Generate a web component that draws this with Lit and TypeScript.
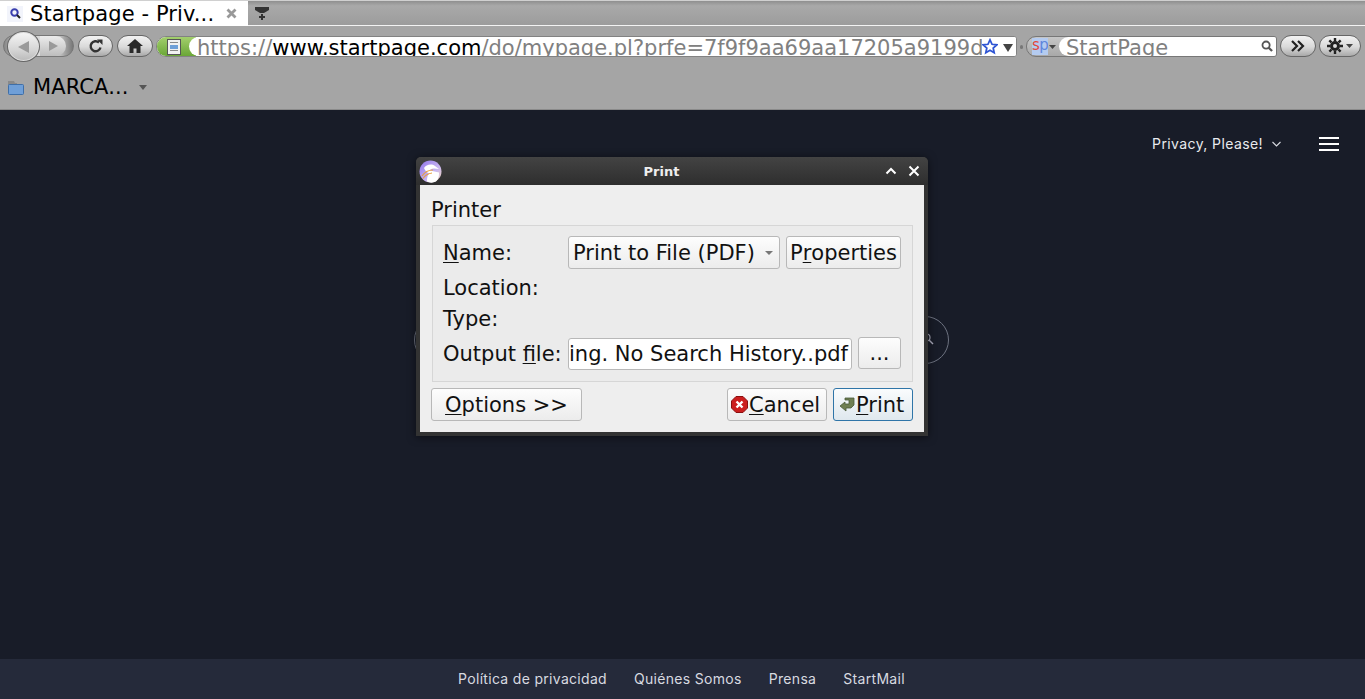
import { LitElement, html, css } from "lit";
import { customElement } from "lit/decorators.js";

@customElement("app-root")
export class AppRoot extends LitElement {
  static styles = css`
    :host { display: flex; flex-direction: column; width: 1365px; height: 699px; overflow: hidden; font-family: "DejaVu Sans", sans-serif; color: #000; }
    .chrome { background: #a5a5a5; height: 110px; flex: none; display: flex; flex-direction: column; border-bottom: 1px solid #8a8a8a; box-sizing: border-box; }
    .tabs { height: 26px; flex: none; display: flex; align-items: flex-start; background: linear-gradient(#8f8f8f, #a9a9a9 20%, #9c9c9c); border-bottom: 1px solid #f3f3f3; border-top: 1px solid #d0d0d0; box-sizing: border-box; }
    .tab { width: 248px; height: 25px; background: #fff; display: flex; align-items: center; box-sizing: border-box; padding-left: 7px; flex: none; }
    .tab-title { font-size: 21px; line-height: 25px; padding-top: 2px; margin-left: 7px; width: 195px; white-space: nowrap; letter-spacing: 0.1px; }
    .tab-close { width: 11px; height: 11px; flex: none; margin-left: 1px; }
    .all-tabs { margin: 6px 0 0 7px; width: 14px; height: 13px; flex: none; }
    .nav { height: 42px; flex: none; display: flex; align-items: flex-start; position: relative; padding: 9px 0 0 3px; box-sizing: border-box; }
    .backfwd { width: 71px; height: 22px; flex: none; position: relative; border-radius: 11px; border: 1px solid #777; box-sizing: border-box; background: linear-gradient(90deg, #888, #c8c8c8 20%, #e0e0e0 65%, #bcbcbc 82%, #777); }
    .fwd { position: absolute; left: 36px; top: 0; width: 26px; height: 20px; background: linear-gradient(#ececec, #bdbdbd); border-radius: 0 10px 10px 0; display: flex; align-items: center; justify-content: center; }
    .back { position: absolute; left: 3px; top: -5px; width: 33px; height: 31px; box-sizing: border-box; border: 1px solid #666; border-radius: 50%; background: linear-gradient(#f6f6f6, #d6d6d6 60%, #b9b9b9); box-shadow: 0 0 0 1px #ddd inset; display: flex; align-items: center; justify-content: center; }
    .pill { height: 22px; border: 1px solid #666; border-radius: 11px; box-sizing: border-box; background: linear-gradient(#f2f2f2, #d9d9d9 55%, #a9a9a9); display: flex; align-items: center; justify-content: center; flex: none; }
    .reload { width: 35px; margin-left: 4px; }
    .home { width: 36px; margin-left: 4px; }
    .url { width: 861px; height: 21px; margin: 1px 0 0 3px; flex: none; display: flex; border: 1px solid #828282; border-radius: 10px 3px 3px 10px; box-sizing: border-box; background: #fff; overflow: hidden; }
    .site { width: 39px; flex: none; background: linear-gradient(#a3cf6d, #6aa636); display: flex; align-items: center; padding-left: 10px; box-sizing: border-box; }
    .urlbody { flex: 1; min-width: 0; display: flex; position: relative; border-radius: 10px 0 0 10px; background: #fff; margin-left: -7px; padding-left: 8px; overflow: hidden; }
    .urltext { width: 785px; font-size: 21px; line-height: 22px; white-space: nowrap; overflow: hidden; flex: none; color: #808080; }
    .urltext b { font-weight: normal; color: #000; }
    .star { flex: none; margin: 1px 0 0 0; }
    .drop { flex: none; margin: 7px 0 0 5px; }
    .sep { width: 3px; height: 4px; background: #777; border-radius: 2px; margin: 10px 3px 0 3px; flex: none; }
    .search { width: 251px; height: 21px; margin-top: 1px; flex: none; display: flex; border: 1px solid #777; border-radius: 10px 3px 3px 10px; box-sizing: border-box; background: linear-gradient(#c6c6c6, #a8a8a8); overflow: hidden; }
    .engine { width: 33px; flex: none; display: flex; align-items: center; padding-left: 5px; box-sizing: border-box; }
    .sp { font-size: 15px; line-height: 15px; width: 16px; height: 17px; background: #b4cbf0; color: #e2483a; text-align: center; overflow: hidden; flex: none; letter-spacing: -0.5px; }
    .sp i { font-style: normal; color: #5f86dc; }
    .searchbody { flex: 1; display: flex; background: #fff; border-radius: 10px 0 0 10px; padding-left: 7px; margin-left: -1px; overflow: hidden; }
    .searchtext { flex: 1; font-size: 21px; line-height: 22px; color: #808080; white-space: nowrap; }
    .glass { flex: none; margin: 3px 3px 0 0; }
    .more { width: 36px; margin-left: 3px; }
    .gear { width: 42px; margin-left: 3px; }
    .marks { height: 41px; flex: none; display: flex; align-items: center; padding: 0 0 3px 8px; box-sizing: border-box; }
    .marktext { font-size: 21px; line-height: 28px; margin-left: 9px; letter-spacing: 0.1px; white-space: nowrap; }
    .caret { margin-left: 10px; flex: none; }
    .page { flex: 1; min-height: 0; position: relative; background: #181c28; display: flex; flex-direction: column; font-family: Inter, sans-serif; }
    .head { display: flex; justify-content: flex-end; align-items: center; padding: 20px 26px 0 0; height: 28px; color: #e8eaee; font-size: 14px; letter-spacing: 0.4px; flex: none; }
    .head span { padding-bottom: 2px; }
    .chev { margin: 0 0 0 9px; }
    .burger { width: 20px; height: 14px; margin-left: 38px; border-top: 2px solid #fff; border-bottom: 2px solid #fff; box-sizing: border-box; position: relative; }
    .burger::after { content: ""; position: absolute; left: 0; right: 0; top: 4px; height: 2px; background: #fff; }
    .spacer { flex: 1; }
    .foot { height: 40px; flex: none; box-sizing: border-box; padding: 0 2px 2px 0; background: #252a3a; color: #d8dae0; font-size: 14px; letter-spacing: 0.31px; display: flex; justify-content: center; align-items: center; gap: 27px; }
    .pillbox { position: absolute; left: 414px; top: 206px; width: 535px; height: 48px; box-sizing: border-box; border: 1px solid #6d7280; border-radius: 24px; }
    .pillglass { position: absolute; right: 14px; top: 16px; }
    .dlg { position: absolute; left: 416px; top: 47px; width: 512px; height: 279px; box-sizing: border-box; background: #333; border-radius: 5px 5px 0 0; padding: 0 4px 4px; display: flex; flex-direction: column; box-shadow: 0 1px 8px rgba(0,0,0,.55); font-family: "DejaVu Sans", sans-serif; }
    .bar { height: 28px; flex: none; display: flex; align-items: center; color: #eee; background: linear-gradient(#434343, #2e2e2e); margin: 0 -4px; padding: 0 8px 0 3px; border-radius: 5px 5px 0 0; }
    .bar-title { flex: 1; text-align: center; font-size: 13px; font-weight: bold; padding-right: 4px; }
    .bar-btns { display: flex; gap: 11px; align-items: center; }
    .body { flex: 1; background: #eeeeee; padding: 12px 11px 11px; display: flex; flex-direction: column; font-size: 21px; color: #111; }
    .legend { line-height: 27px; height: 28px; flex: none; }
    .group { height: 157px; width: 481px; margin-left: 1px; flex: none; background: #ebebeb; border: 1px solid #d6d6d6; box-sizing: border-box; padding: 10px 0 0 10px; display: grid; grid-template-columns: 119px 212px 115px; grid-template-rows: 33px 37px 26px 38px; column-gap: 6px; align-items: center; white-space: nowrap; }
    .out { align-self: end; line-height: 32px; }
    .wide { grid-column: 2 / 4; display: flex; gap: 6px; align-self: end; align-items: flex-end; }
    .ctl { box-sizing: border-box; height: 33px; border: 1px solid #b8b8b8; border-radius: 3px; background: linear-gradient(#fdfdfd, #ececec); display: flex; align-items: center; white-space: nowrap; }
    .combo { padding-left: 4px; justify-content: space-between; padding-right: 6px; }
    .prop { justify-content: center; }
    .input { width: 284px; background: #fff; overflow: hidden; padding-left: 0; flex: none; height: 32px; justify-content: flex-start; }
    .dots { width: 43px; height: 32px; justify-content: center; flex: none; margin-bottom: 1px; }
    u { text-underline-offset: 2px; text-decoration-thickness: 1px; }
    .actions { display: flex; align-items: center; margin-top: 6px; }
    .opts { width: 151px; justify-content: center; }
    .gap { flex: 1; }
    .cancel { width: 100px; padding-left: 3px; gap: 1px; }
    .print { width: 80px; margin-left: 6px; padding-left: 5px; gap: 0; border-color: #2f75a8; background: linear-gradient(#fafcfd, #dfe8ee); }
  `;

  render() {
    return html`
      <div class="chrome">
        <div class="tabs">
          <div class="tab">
            <svg width="16" height="16" viewBox="0 0 16 16" style="flex:none"><rect width="16" height="16" fill="#f2f4fb"/><circle cx="7.5" cy="6.5" r="3.2" fill="none" stroke="#3a3fae" stroke-width="2"/><path d="M10 9l3 3" stroke="#222" stroke-width="2"/></svg>
            <span class="tab-title">Startpage - Priv...</span>
            <svg class="tab-close" viewBox="0 0 11 11"><path d="M1.5 1.500l8 8M9.500 1.500l-8 8" stroke="#999" stroke-width="2.800"/></svg>
          </div>
          <svg class="all-tabs" viewBox="0 0 14 13"><path d="M0 0h14v3L9 6H5L0 3z" fill="#333"/><path d="M6 7h2v2h2v2H8v2H6v-2H4V9h2z" fill="#333"/></svg>
        </div>
        <div class="nav">
          <div class="backfwd">
            <div class="fwd"><svg width="12" height="12" viewBox="0 0 12 12"><path d="M2 1l9 5-9 5z" fill="#9a9a9a"/></svg></div>
            <div class="back"><svg width="14" height="14" viewBox="0 0 14 14"><path d="M12 1L1 7l11 6z" fill="#9a9a9a"/></svg></div>
          </div>
          <div class="pill reload"><svg width="16" height="16" viewBox="0 0 16 16"><path d="M12.500 9.500A5 5 0 1 1 11 4.500" fill="none" stroke="#333" stroke-width="2.400"/><path d="M9 1.500h5.500V7z" fill="#333"/></svg></div>
          <div class="pill home"><svg width="16" height="14" viewBox="0 0 16 14"><path d="M8 0L0 7h2.500v7H6.500V9.500h3V14h4V7H16z" fill="#2a2a2a"/></svg></div>
          <div class="url">
            <div class="site"><svg width="14" height="16" viewBox="0 0 14 16"><rect x=".5" y=".5" width="13" height="15" fill="#f1f1f1" stroke="#555"/><rect x="3" y="3" width="8" height="1" fill="#8a8a8a"/><rect x="3" y="6" width="8" height="4" fill="#6fa0d8"/><rect x="3" y="11" width="8" height="1" fill="#8a8a8a"/></svg></div>
            <div class="urlbody">
              <div class="urltext">https://<b>www.startpage.com</b>/do/mypage.pl?prfe=7f9f9aa69aa17205a9199d</div>
              <svg class="star" width="16" height="17" viewBox="0 0 18 18"><path d="M9 1.500l2.300 5 5.300.6-4 3.600 1.100 5.300L9 13.300 4.300 16l1.100-5.300-4-3.600 5.300-.6z" fill="#fff" stroke="#2f55d4" stroke-width="2"/></svg>
              <svg class="drop" width="10" height="8" viewBox="0 0 10 8"><path d="M0 0h10L5 8z" fill="#444"/></svg>
            </div>
          </div>
          <div class="sep"></div>
          <div class="search">
            <div class="engine"><span class="sp">s<i>p</i></span><svg width="7" height="4" viewBox="0 0 7 4" style="margin-left:1px"><path d="M0 0h7L3.500 4z" fill="#444"/></svg></div>
            <div class="searchbody">
              <div class="searchtext">StartPage</div>
              <svg class="glass" width="12" height="12" viewBox="0 0 13 13"><circle cx="5.500" cy="5.500" r="3.900" fill="none" stroke="#555" stroke-width="2"/><path d="M8 8l4 4" stroke="#555" stroke-width="2.400"/></svg>
            </div>
          </div>
          <div class="pill more"><svg width="14" height="12" viewBox="0 0 14 12"><path d="M1 1l5 5-5 5M7 1l5 5-5 5" fill="none" stroke="#222" stroke-width="2.200"/></svg></div>
          <div class="pill gear"><svg width="16" height="16" viewBox="0 0 16 16"><circle cx="8" cy="8" r="3.500" fill="none" stroke="#222" stroke-width="3"/><path d="M8 0v16M0 8h16M2.300 2.300l11.400 11.400M13.700 2.300L2.300 13.700" stroke="#222" stroke-width="2.400" stroke-dasharray="3 10 3"/></svg><svg width="7" height="4" viewBox="0 0 7 4" style="margin-left:3px"><path d="M0 0h7L3.500 4z" fill="#444"/></svg></div>
        </div>
        <div class="marks">
          <svg width="16" height="15" viewBox="0 0 16 15" style="flex:none"><path d="M0 1h6l1 2h2v2H0z" fill="#8a8a8a"/><rect x=".5" y="4.500" width="15" height="10" rx="1" fill="#6f9fd8" stroke="#3f6fa8"/></svg>
          <span class="marktext">MARCA...</span>
          <svg class="caret" width="8" height="5" viewBox="0 0 8 5"><path d="M0 0h8L4 5z" fill="#555"/></svg>
        </div>
      </div>
      <div class="page">
        <div class="head">
          <span>Privacy, Please!</span>
          <svg class="chev" width="9" height="6" viewBox="0 0 9 6"><path d="M.5 1l4 4 4-4" fill="none" stroke="#d8dae0" stroke-width="1.100"/></svg>
          <div class="burger"></div>
        </div>
        <div class="spacer"></div>
        <div class="foot">
          <span>Política de privacidad</span><span>Quiénes Somos</span><span>Prensa</span><span>StartMail</span>
        </div>
        <div class="pillbox">
          <svg class="pillglass" width="12" height="12" viewBox="0 0 12 12"><circle cx="4.500" cy="4.500" r="3.500" fill="none" stroke="#aab" stroke-width="1.200"/><path d="M7 7l4 4" stroke="#aab" stroke-width="1.400"/></svg>
        </div>
        <div class="dlg">
          <div class="bar">
            <svg width="23" height="23" viewBox="0 0 23 23" style="flex:none"><defs><linearGradient id="kb" x1="0" y1="0" x2="1" y2="1"><stop offset="0" stop-color="#8f74ea"/><stop offset=".6" stop-color="#c9b6f2"/><stop offset="1" stop-color="#f4d9b4"/></linearGradient></defs><circle cx="11.500" cy="11.500" r="11" fill="url(#kb)"/><path d="M5 8c2-3 7-5 11-2l4 3-5-.5c-3 0-4 1-4 2l9 2c0 3 0 6-3 9-3 1.500-6 1.500-9 0 0-3 0-5 2-8C7 12 6 10 5 8z" fill="#fff"/><path d="M3 16c2-3 6-6 11-6M4 18.500c2-3 5-5 9-5.500" fill="none" stroke="#e8a040" stroke-width="1.100"/></svg>
            <div class="bar-title">Print</div>
            <div class="bar-btns">
              <svg width="12" height="8" viewBox="0 0 12 8"><path d="M1.500 6.500L6 2l4.500 4.500" fill="none" stroke="#fff" stroke-width="2"/></svg>
              <svg width="12" height="12" viewBox="0 0 12 12"><path d="M1.500 1.500l9 9M10.500 1.500l-9 9" stroke="#fff" stroke-width="2"/></svg>
            </div>
          </div>
          <div class="body">
            <div class="legend">Printer</div>
            <div class="group">
              <div><u>N</u>ame:</div>
              <div class="ctl combo"><span>Print to File (PDF)</span><svg width="8" height="4" viewBox="0 0 8 4"><path d="M0 0h8L4 4z" fill="#777"/></svg></div>
              <div class="ctl prop">P<u>r</u>operties</div>
              <div style="grid-column:1 / 4">Location:</div>
              <div style="grid-column:1 / 4">Type:</div>
              <div class="out">Output <u>f</u>ile:</div>
              <div class="wide">
                <div class="ctl input">ing. No Search History..pdf</div>
                <div class="ctl dots">...</div>
              </div>
            </div>
            <div class="actions">
              <div class="ctl opts"><span><u>O</u>ptions &gt;&gt;</span></div>
              <div class="gap"></div>
              <div class="ctl cancel">
                <svg width="17" height="17" viewBox="0 0 17 17" style="flex:none"><path d="M5 .5h7L16.500 5v7L12 16.500H5L.5 12V5z" fill="#cc1f1f" stroke="#8a1010"/><path d="M5.500 5.500l6 6M11.500 5.500l-6 6" stroke="#fff" stroke-width="2.400"/></svg>
                <span><u>C</u>ancel</span>
              </div>
              <div class="ctl print">
                <svg width="17" height="16" viewBox="0 0 17 16" style="flex:none"><path d="M6 1h9v7l-3 3H7v3L1 9l5-4v2h4V3H6z" fill="#6f7f52" stroke="#4a5a3a" stroke-width=".8"/></svg>
                <span><u>P</u>rint</span>
              </div>
            </div>
          </div>
        </div>
      </div>
    `;
  }
}
